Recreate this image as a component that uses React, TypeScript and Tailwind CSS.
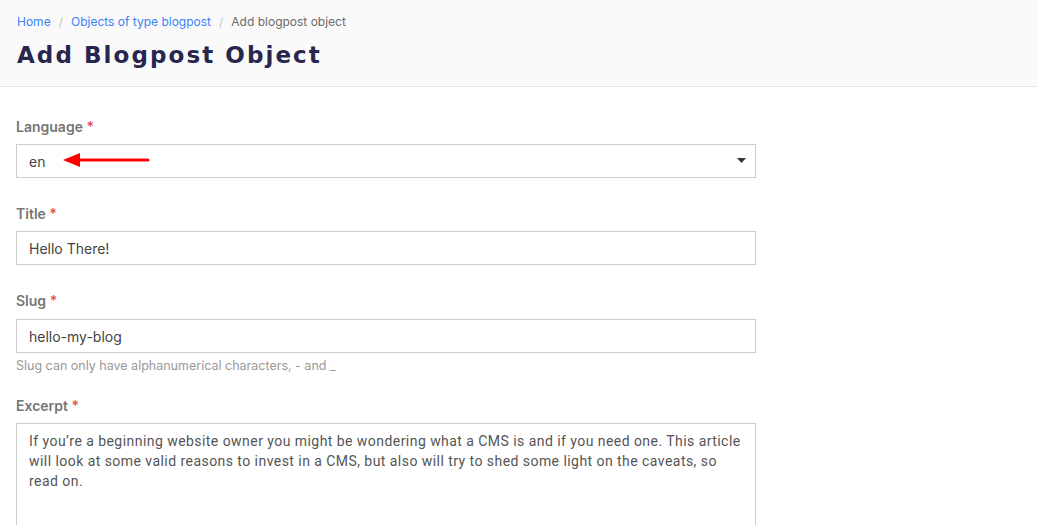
import React from 'react';

function Label({ text }: { text: string }) {
  return (
    <label className="block text-[14px] leading-[20px] font-semibold text-[#767676] mb-[7px]">
      {text} <span className="text-[#e05252]">*</span>
    </label>
  );
}

function App() {
  return (
    <div className="min-h-[525px] bg-white font-['Inter',_'Liberation_Sans',_sans-serif]">
      <div className="bg-[#fafafa] border-b border-[#e6e6e6] h-[87px] px-[17px] pt-[14px]">
        <nav className="flex items-center text-[12px] leading-[16px]">
          <a className="text-[#3b82f6]">Home</a>
          <span className="mx-[8px] text-[#c4c4c4]">/</span>
          <a className="text-[#3b82f6]">Objects of type blogpost</a>
          <span className="mx-[8px] text-[#c4c4c4]">/</span>
          <span className="text-[#6b6b6b]">Add blogpost object</span>
        </nav>
        <h1 className="mt-[8px] text-[23px] leading-[34px] font-extrabold tracking-[0.09em] text-[#27264f] font-['DejaVu_Sans',_sans-serif]">
          Add Blogpost Object
        </h1>
      </div>

      <form className="px-[16px] pt-[30px] w-[772px]">
        <div className="mb-[26px]">
          <Label text="Language" />
          <div className="relative h-[34px] border border-[#cccccc] flex items-center px-[12px] text-[14px] text-[#444]">
            <span>en</span>
            <svg className="absolute left-[44px] top-[6px]" width="90" height="20" viewBox="0 0 90 20">
              <polygon points="2,9 19,2 19,16" fill="#f00" />
              <line x1="16" y1="9" x2="87" y2="9" stroke="#f00" strokeWidth="3" strokeLinecap="round" />
            </svg>
            <svg className="absolute right-[9px] top-[13px]" width="9" height="6" viewBox="0 0 9 6">
              <polygon points="0,0 9,0 4.5,5" fill="#333" />
            </svg>
          </div>
        </div>

        <div className="mb-[26px]">
          <Label text="Title" />
          <input
            readOnly
            value="Hello There!"
            className="w-full h-[34px] border border-[#cccccc] px-[12px] text-[14px] text-[#444] outline-none"
          />
        </div>

        <div className="mb-[22px]">
          <Label text="Slug" />
          <div className="h-[1px]" />
          <input
            readOnly
            value="hello-my-blog"
            className="w-full h-[34px] border border-[#cccccc] px-[12px] text-[14px] text-[#444] outline-none"
          />
          <p className="mt-[5px] text-[12.5px] leading-[16px] text-[#999]">
            Slug can only have alphanumerical characters, - and _
          </p>
        </div>

        <div>
          <Label text="Excerpt" />
          <textarea
            readOnly
            value="If you’re a beginning website owner you might be wondering what a CMS is and if you need one. This article will look at some valid reasons to invest in a CMS, but also will try to shed some light on the caveats, so read on."
            className="block w-full h-[140px] border border-[#cccccc] px-[12px] pt-[7px] text-[14px] leading-[20px] tracking-[0.45px] text-[#555] outline-none resize-none font-['Roboto',_sans-serif]"
          />
        </div>
      </form>
    </div>
  );
}

export default App;
